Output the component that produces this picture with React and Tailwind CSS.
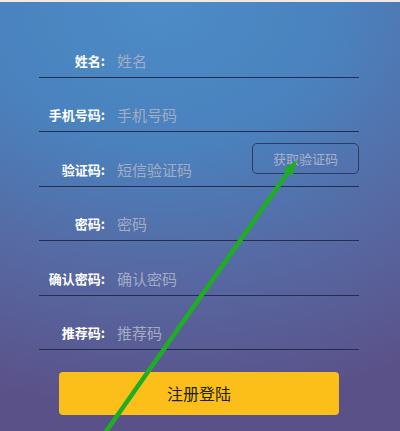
import React from 'react'

const FIELDS = [
  { label: '姓名:', placeholder: '姓名' },
  { label: '手机号码:', placeholder: '手机号码' },
  { label: '验证码:', placeholder: '短信验证码', code: true },
  { label: '密码:', placeholder: '密码' },
  { label: '确认密码:', placeholder: '确认密码' },
  { label: '推荐码:', placeholder: '推荐码' },
]

const FONT = 'font-["Microsoft_YaHei","Noto_Sans_CJK_SC",sans-serif]'

function Field({ field }) {
  return (
    <div className="flex items-end h-[54.4px] border-b border-[#252c4e] pb-[7px]">
      <span className="w-[66px] text-right text-[13px] leading-[18px] font-bold text-white shrink-0">
        {field.label}
      </span>
      <input
        placeholder={field.placeholder}
        className="ml-[12px] flex-1 min-w-0 bg-transparent outline-none text-[15px] leading-[18px] text-white placeholder:text-[#a3acc3]"
      />
      {field.code && (
        <button className="self-center mb-[-6px] w-[107px] h-[31px] rounded-[5px] border border-[#2e3b68] text-[13px] text-[#a9b0c4] shrink-0">
          获取验证码
        </button>
      )}
    </div>
  )
}

function Arrow() {
  return (
    <svg className="absolute inset-0 pointer-events-none" width="400" height="431" viewBox="0 0 400 431">
      <line x1="105" y1="433" x2="291" y2="168" stroke="#1fae22" strokeWidth="4.5" />
      <polygon points="297,160 292.5,175.5 283.5,169.2" fill="#1fae22" />
    </svg>
  )
}

export default function App() {
  return (
    <div className={`relative w-[400px] h-[431px] overflow-hidden ${FONT}`}>
      <div className="h-[2px] bg-[#efeae6]" />
      <div className="h-[429px] bg-[radial-gradient(ellipse_130%_95%_at_40%_0%,#4c8cc6_0%,#4a82be_35%,#566aa4_65%,#5b5189_100%)]">
        <div className="ml-[39px] w-[320px] pt-[21.6px]">
          {FIELDS.map(f => (
            <Field key={f.label} field={f} />
          ))}
        </div>
        <button className="mt-[22px] ml-[59px] w-[280px] h-[43px] rounded-[4px] bg-[#fcbf1a] text-[16px] text-[#1e1e1e]">
          注册登陆
        </button>
      </div>
      <Arrow />
    </div>
  )
}
